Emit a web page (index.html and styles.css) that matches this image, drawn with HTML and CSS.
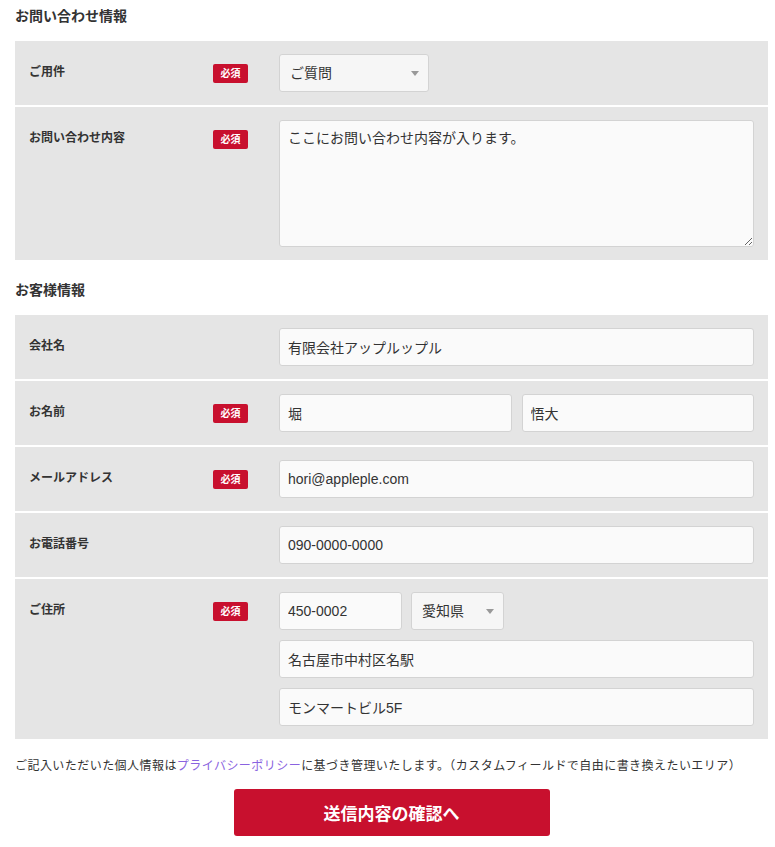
FILE: index.html
```html
<!DOCTYPE html>
<html lang="ja">
<head>
<meta charset="utf-8">
<title>お問い合わせ</title>
<link rel="stylesheet" href="styles.css">
</head>
<body>
<div class="page">
  <h2 class="section-title first">お問い合わせ情報</h2>
  <div class="table">
    <div class="row">
      <div class="label">ご用件</div>
      <div class="req"><span class="badge">必須</span></div>
      <div class="fields">
        <div class="select-wrap w150">
          <select class="control"><option>ご質問</option></select>
        </div>
      </div>
    </div>
    <div class="row">
      <div class="label">お問い合わせ内容</div>
      <div class="req"><span class="badge">必須</span></div>
      <div class="fields">
        <textarea class="control textarea">ここにお問い合わせ内容が入ります。</textarea>
      </div>
    </div>
  </div>

  <h2 class="section-title">お客様情報</h2>
  <div class="table">
    <div class="row">
      <div class="label">会社名</div>
      <div class="req"></div>
      <div class="fields">
        <input class="control full" type="text" value="有限会社アップルップル">
      </div>
    </div>
    <div class="row">
      <div class="label">お名前</div>
      <div class="req"><span class="badge">必須</span></div>
      <div class="fields line">
        <input class="control grow" type="text" value="堀">
        <input class="control grow" type="text" value="悟大">
      </div>
    </div>
    <div class="row">
      <div class="label">メールアドレス</div>
      <div class="req"><span class="badge">必須</span></div>
      <div class="fields">
        <input class="control full" type="text" value="hori@appleple.com">
      </div>
    </div>
    <div class="row">
      <div class="label">お電話番号</div>
      <div class="req"></div>
      <div class="fields">
        <input class="control full" type="text" value="090-0000-0000">
      </div>
    </div>
    <div class="row">
      <div class="label">ご住所</div>
      <div class="req"><span class="badge">必須</span></div>
      <div class="fields stack">
        <div class="line tight">
          <input class="control zip" type="text" value="450-0002">
          <div class="select-wrap w93">
            <select class="control"><option>愛知県</option></select>
          </div>
        </div>
        <input class="control full" type="text" value="名古屋市中村区名駅">
        <input class="control full" type="text" value="モンマートビル5F">
      </div>
    </div>
  </div>

  <p class="note">ご記入いただいた個人情報は<a href="#" class="link">プライバシーポリシー</a>に基づき管理いたします。（カスタムフィールドで自由に書き換えたいエリア）</p>
  <div class="actions">
    <button class="submit" type="button">送信内容の確認へ</button>
  </div>
</div>
</body>
</html>
```

FILE: styles.css
```css
* { box-sizing: border-box; }
html, body { margin: 0; padding: 0; background: #fff; }
body {
  font-family: "Liberation Sans", "Noto Sans CJK JP", sans-serif;
  color: #333;
}
.page {
  width: 753px;
  margin-left: 15px;
}
.section-title {
  margin: 20px 0 15px;
  font-size: 14px;
  line-height: 20px;
  font-weight: bold;
  color: #333;
}
.section-title.first { margin-top: 6px; }
.table {
  display: flex;
  flex-direction: column;
  gap: 2px;
  background: #fff;
}
.row {
  display: flex;
  align-items: flex-start;
  background: #e5e5e5;
  padding: 13px 14px;
}
.label {
  width: 184px;
  margin-top: 9px;
  font-size: 12px;
  line-height: 18px;
  font-weight: bold;
  color: #333;
}
.req {
  width: 66px;
  height: 38px;
  display: flex;
  align-items: center;
}
.badge {
  display: inline-block;
  width: 35px;
  height: 19px;
  line-height: 19px;
  text-align: center;
  background: #c8102e;
  color: #fff;
  font-size: 10px;
  font-weight: bold;
  border-radius: 2px;
}
.fields {
  flex: 1;
  min-width: 0;
}
.line {
  display: flex;
  gap: 10px;
}
.line.tight { gap: 9px; }
.stack {
  display: flex;
  flex-direction: column;
  gap: 10px;
}
.control {
  display: block;
  height: 38px;
  border: 1px solid #d3d3d3;
  border-radius: 3px;
  background: #fafafa;
  padding: 0 8px;
  font-family: "Liberation Sans", "Noto Sans CJK JP", sans-serif;
  font-size: 14px;
  color: #333;
  outline: none;
}
.full { width: 100%; }
.grow { flex: 1; min-width: 0; }
.zip { width: 123px; }
.textarea {
  width: 100%;
  height: 127px;
  padding: 7px 8px;
  line-height: 20px;
  resize: vertical;
}
.select-wrap {
  position: relative;
}
.select-wrap .control {
  width: 100%;
  appearance: none;
  -webkit-appearance: none;
  background: #f6f6f6;
  padding-left: 10px;
}
.select-wrap::after {
  content: "";
  position: absolute;
  right: 10px;
  top: 17px;
  border-left: 4px solid transparent;
  border-right: 4px solid transparent;
  border-top: 5px solid #999;
  pointer-events: none;
}
.w150 { width: 150px; }
.w93 { width: 93px; }
.note {
  margin: 18px 0 0;
  font-size: 12px;
  line-height: 18px;
  letter-spacing: 0.45px;
  color: #333;
}
.link {
  color: #8a63e0;
  text-decoration: none;
}
.actions {
  display: flex;
  justify-content: center;
  margin-top: 14px;
}
.submit {
  width: 316px;
  height: 47px;
  border: none;
  border-radius: 3px;
  background: #c8102e;
  color: #fff;
  font-family: "Liberation Sans", "Noto Sans CJK JP", sans-serif;
  font-size: 17px;
  font-weight: bold;
}
```
